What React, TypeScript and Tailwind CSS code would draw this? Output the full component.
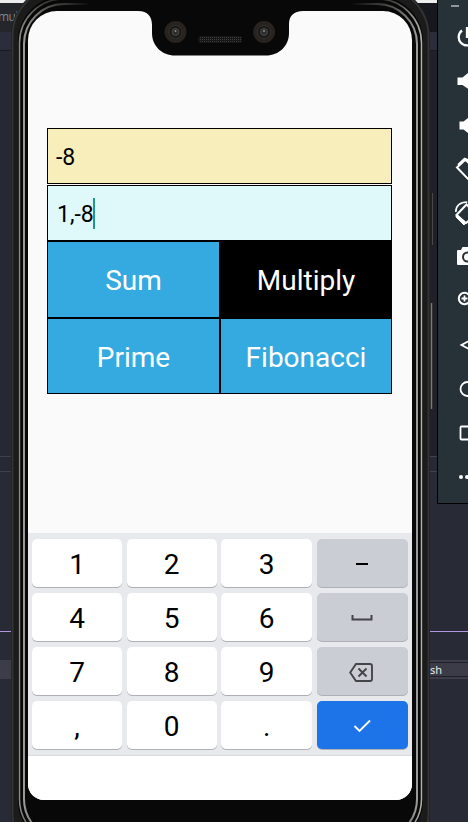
import React from "react";

const font = "font-['Roboto','Noto_Sans',sans-serif]";

function Desktop() {
  return (
    <div className="absolute inset-0 flex flex-col bg-[#282a36]">
      <div className="h-[3px] bg-[#ededed]" />
      <div className="flex h-[29px] justify-between bg-[#25262b] font-['Open_Sans','Noto_Sans',sans-serif] text-[12px] leading-[28px] tracking-[-0.5px] text-[#7d8794]">
        <span className="-ml-[2px]">mult</span>
        <span className="w-[60px] bg-[#17181f]" />
      </div>
      <div className="h-[18px] bg-[#2b2d3c]" />
      <div className="h-px bg-[#191a22]" />
      <div className="flex h-[405px] justify-between bg-[#262834]">
        <span className="ml-auto w-[60px] bg-[#20202b]" />
      </div>
      <div className="h-[16px] border-y border-[#3e404f] bg-[#262834]" />
      <div className="h-[159px]" />
      <div className="h-px bg-[#b295e0]" />
      <div className="h-[28px]" />
      <div className="flex h-[19px] items-center justify-end bg-[#3c3d48] font-['Noto_Sans',sans-serif] text-[11px] text-[#e8e8e8]">
        <span className="flex h-[19px] w-[60px] items-center border-y-2 border-[#3c3d48] bg-[#3b3c47]">
          <span className="h-[15px] w-full border-y border-[#1d1e26] pl-[22px] leading-[14px]">sh</span>
        </span>
      </div>
    </div>
  );
}

function PhoneShell() {
  return (
    <svg className="absolute inset-0" width="468" height="822" viewBox="0 0 468 822" fill="none">
      <defs>
        <linearGradient id="outerShine" gradientUnits="userSpaceOnUse" x1="19" y1="0" x2="422" y2="0">
          <stop offset="0" stopColor="#8b8b87" />
          <stop offset="0.060" stopColor="#44443f" />
          <stop offset="0.150" stopColor="#080808" />
          <stop offset="0.850" stopColor="#080808" />
          <stop offset="0.940" stopColor="#555552" />
          <stop offset="1" stopColor="#b5b5ae" />
        </linearGradient>
        <linearGradient id="innerShine" gradientUnits="userSpaceOnUse" x1="23" y1="0" x2="418" y2="0">
          <stop offset="0" stopColor="#9c9e9c" />
          <stop offset="0.060" stopColor="#555552" />
          <stop offset="0.170" stopColor="#080808" />
          <stop offset="0.830" stopColor="#080808" />
          <stop offset="0.940" stopColor="#555552" />
          <stop offset="1" stopColor="#9c9e9c" />
        </linearGradient>
      </defs>
      <path d="M426 192h7v54h-7zM426 301h7v109h-7z" fill="#20211f" />
      <path d="M432.500 193v52" stroke="#484846" />
      <path d="M431.500 303v106" stroke="#777773" strokeWidth="1.500" />
      <rect x="11" y="-15" width="419" height="880" rx="51" fill="#1b1b1b" />
      <rect x="12.500" y="-13.500" width="416" height="877" rx="50" stroke="#333333" strokeWidth="2" />
      <rect x="18" y="-4" width="405" height="850" rx="45" fill="#080808" />
      <rect x="19.500" y="-1" width="402" height="844" rx="44" stroke="url(#outerShine)" strokeWidth="1.500" />
      <rect x="24" y="4" width="393" height="835" rx="40" stroke="url(#innerShine)" strokeWidth="2" />
    </svg>
  );
}

function Cameras() {
  return (
    <svg className="absolute left-[136px] top-0" width="170" height="57" viewBox="136 0 170 57">
      <path d="M138 11C148 11 152 17 152 25V33C152 46 162 55.500 175 55.500H266C279 55.500 289 46 289 33V24C289 16 294 11 303 11V8H138Z" fill="#080808" />
      {[175.5, 264].map((x) => (
        <g key={x}>
          <circle cx={x} cy="32" r="11" fill="#28231f" />
          <circle cx={x} cy="32" r="6.500" fill="#191919" stroke="#33312f" />
          <circle cx={x} cy="32" r="3.500" fill="#2e2e2e" stroke="#4c4a47" />
          <circle cx={x} cy="31" r="1" fill="#918c84" />
        </g>
      ))}
      <rect x="198" y="36" width="44" height="7" rx="3" fill="#161616" />
      <path d="M200 37.500h41M200 39.500h41M200 41.500h41" stroke="#3c3c3c" strokeDasharray="1 1" />
    </svg>
  );
}

function Calculator() {
  const cell = "flex items-center justify-center pt-[3px] text-[28px] text-white";
  return (
    <div className="ml-[19px] mt-[117px] w-[345px]">
      <div className="flex h-[56px] items-center border border-black bg-[#f8eebc] pl-[8px] pt-[5px] text-[23px] text-black">-8</div>
      <div className="mt-px flex h-[56px] items-center border border-black bg-[#dff8fa] pl-[9px] text-[23px] text-black">
        <span className="pt-[5px]">1,-8</span>
        <span className="-ml-px h-[31px] w-[2px] bg-[#22988c]" />
      </div>
      <div className="grid h-[153px] grid-cols-[171px_170px] grid-rows-[75px_74px] gap-[2px] border border-black bg-black">
        <div className={`${cell} bg-[#35aae0]`}>Sum</div>
        <div className={`${cell} bg-black`}>Multiply</div>
        <div className={`${cell} bg-[#35aae0]`}>Prime</div>
        <div className={`${cell} bg-[#35aae0]`}>Fibonacci</div>
      </div>
    </div>
  );
}

const keys = ["1", "2", "3", "minus", "4", "5", "6", "space", "7", "8", "9", "delete", ",", "0", ".", "enter"];

function KeyFace({ name }: { name: string }) {
  if (name === "minus") return <span className="mb-[2px] h-[2px] w-[12px] bg-black" />;
  if (name === "space")
    return (
      <svg width="22" height="8" viewBox="0 0 22 8" fill="none" stroke="#444548" strokeWidth="2">
        <path d="M1.500 0v4.500h19V0" />
      </svg>
    );
  if (name === "delete")
    return (
      <svg className="-ml-[2px]" width="24" height="20" viewBox="0 0 24 20" fill="none" stroke="#444548" strokeWidth="1.900">
        <path d="M7 1h14a2 2 0 0 1 2 2v13a2 2 0 0 1-2 2H7L1.200 9.500Z M9.500 5.500l8 8M17.500 5.500l-8 8" />
      </svg>
    );
  if (name === "enter")
    return (
      <svg width="18" height="16" viewBox="0 0 18 16" fill="none" stroke="white" strokeWidth="1.900">
        <path d="M1.500 7l5 5L17 1.500" />
      </svg>
    );
  return <>{name}</>;
}

function Keyboard() {
  return (
    <div className="h-[223px] border-b border-[#dadbde] bg-[#e8e9ed] px-[4px] pt-[6px]">
      <div className="grid grid-cols-[90px_90px_91px_91px] gap-x-[4.600px] gap-y-[6px]">
        {keys.map((key, i) => (
          <div
            key={key}
            className={`flex h-[48px] items-center justify-center rounded-[5px] pt-[3px] text-[28px] text-black shadow-[0_1px_0_#aeb0b5] ${
              key === "enter" ? "bg-[#1d73e8]" : i % 4 === 3 ? "bg-[#cbcdd5]" : "bg-white"
            }`}
          >
            <KeyFace name={key} />
          </div>
        ))}
      </div>
    </div>
  );
}

function EmulatorToolbar() {
  return (
    <div className="absolute left-[437px] top-0 h-[504px] w-[31px] overflow-hidden border-b border-l border-black bg-[#273238]">
      <svg width="50" height="503" viewBox="438 0 50 503" fill="none" stroke="white" strokeWidth="1.800">
        <path d="M451 6h8" stroke="#9ba1a4" />
        <path d="M462 30.500a8.300 8.300 0 1 0 10 0M467 27v11" strokeWidth="2.300" />
        <path d="M457.500 77.500h5l6-5v16.500l-6-4h-5ZM459.500 121.500h4l5-4v16l-5-4h-4Z" fill="white" stroke="none" />
        <path d="M457 167.500l8.500-8 14 15-8 8Z" strokeWidth="2" />
        <path d="M457.500 164l7-6.500 5 2-2 2.500-3-1-6 6Z" fill="white" stroke="none" />
        <path d="M456.500 215l10-10.500 10 10-10.500 8.500Z" strokeWidth="2" />
        <path d="M456.500 214l9 9-1.500 2-8-8Z" fill="white" stroke="white" strokeWidth="1" />
        <path d="M455.800 212q0-9.500 11.500-10" strokeWidth="1.600" />
        <path d="M458 250h3l1.500-3h10v18H458q-1 0-1-1v-13q0-1 1-1Z" fill="white" stroke="none" />
        <circle cx="467.500" cy="257" r="4.500" stroke="#273238" strokeWidth="2" />
        <circle cx="464.500" cy="298.500" r="5.700" strokeWidth="2" />
        <path d="M461.500 298.500h6M464.500 295.500v6M468 302l6 6" />
        <path d="M473 339l-11.500 6 11.500 6" />
        <circle cx="467.500" cy="389" r="7" />
        <rect x="460.500" y="426.500" width="15" height="13" rx="1" />
        <g fill="white" stroke="none"><circle cx="461" cy="477" r="2" /><circle cx="467" cy="477" r="2" /></g>
      </svg>
    </div>
  );
}

export default function App() {
  return (
    <div className={`relative h-[822px] w-[468px] overflow-hidden ${font}`}>
      <Desktop />
      <PhoneShell />
      <main className="absolute left-[28px] top-[11px] flex h-[789px] w-[384px] flex-col overflow-hidden rounded-b-[16px] rounded-t-[29px] bg-[#fafafa]">
        <Calculator />
        <div className="mt-auto">
          <Keyboard />
          <div className="h-[44px] bg-white" />
        </div>
      </main>
      <Cameras />
      <EmulatorToolbar />
    </div>
  );
}
